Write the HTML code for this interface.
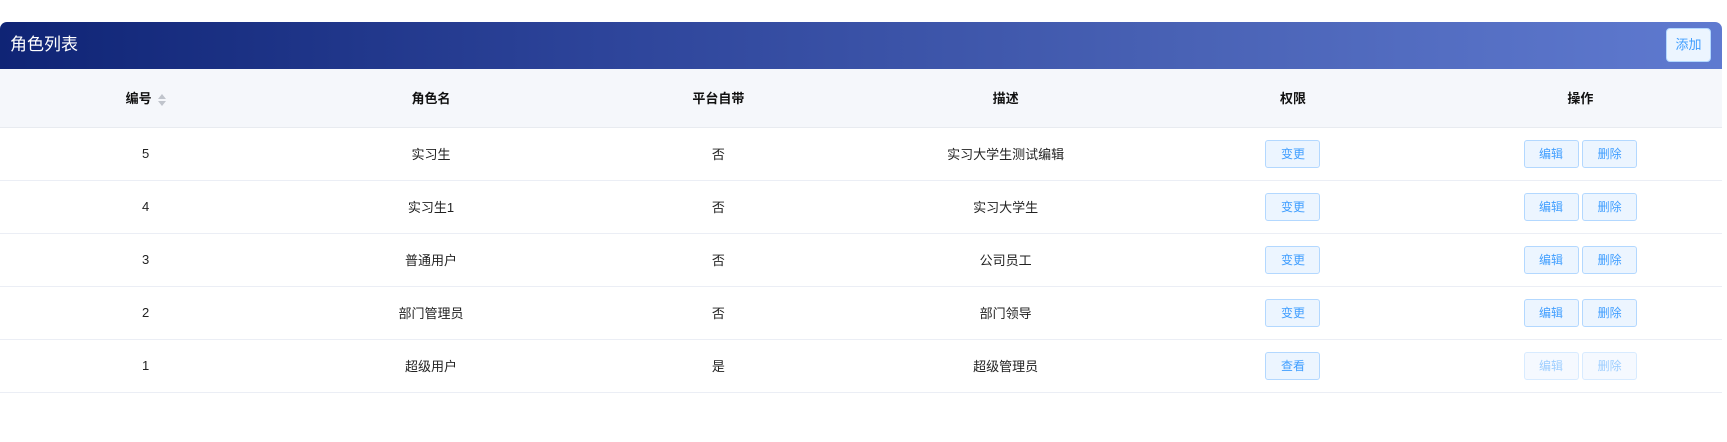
<!DOCTYPE html>
<html><head><meta charset="utf-8"><style>
*{margin:0;padding:0;box-sizing:border-box}
body{width:1727px;height:442px;background:#fff;font-family:"Liberation Sans","Noto Sans CJK SC",sans-serif;position:relative;overflow:hidden}
.bar{position:absolute;left:0;top:22px;width:1722px;height:47px;border-radius:7px 7px 0 0;background:linear-gradient(90deg,#0f2475 0%,#2d449a 35%,#4a63b6 70%,#5f7ad0 100%)}
.bar .t{position:absolute;left:10px;top:13px;color:#fff;font-size:17px;line-height:20px}
.add{position:absolute;left:1666px;top:6px;width:45px;height:34px;background:#ecf5ff;border:1px solid #b3d8ff;border-radius:4px;color:#409eff;font-size:13px;line-height:32px;text-align:center}
table{position:absolute;left:0;top:69px;width:1724px;border-collapse:collapse;table-layout:fixed}
th{height:58px;background:#f5f7fb;font-size:13px;font-weight:bold;color:#111;border-bottom:1px solid #e8ebf0}
td{height:53px;font-size:13px;color:#222;text-align:center;border-bottom:1px solid #ebeef5}
th:first-child,td:first-child{padding-left:4px}
.b{display:inline-block;width:55px;height:28px;line-height:26px;background:#ecf5ff;border:1px solid #b3d8ff;border-radius:3px;color:#409eff;font-size:12px;vertical-align:middle}
.d{opacity:.5}
.s{display:inline-block;vertical-align:middle;margin-left:6px;width:8px;height:12px;position:relative}
.s:before{content:"";position:absolute;left:0;top:0;border:4px solid transparent;border-bottom:5px solid #c0c4cc;border-top:0}
.s:after{content:"";position:absolute;left:0;top:7px;border:4px solid transparent;border-top:5px solid #c0c4cc;border-bottom:0}
.wrap{position:absolute;left:0;top:0;width:1722px;height:442px;overflow:hidden}
</style></head><body>
<div class="bar"><div class="t">角色列表</div><div class="add">添加</div></div>
<div class="wrap">
<table>
<tr><th>编号<span class="s"></span></th><th>角色名</th><th>平台自带</th><th>描述</th><th>权限</th><th>操作</th></tr>
<tr><td>5</td><td>实习生</td><td>否</td><td>实习大学生测试编辑</td><td><span class="b">变更</span></td><td><span class="b">编辑</span> <span class="b">删除</span></td></tr>
<tr><td>4</td><td>实习生1</td><td>否</td><td>实习大学生</td><td><span class="b">变更</span></td><td><span class="b">编辑</span> <span class="b">删除</span></td></tr>
<tr><td>3</td><td>普通用户</td><td>否</td><td>公司员工</td><td><span class="b">变更</span></td><td><span class="b">编辑</span> <span class="b">删除</span></td></tr>
<tr><td>2</td><td>部门管理员</td><td>否</td><td>部门领导</td><td><span class="b">变更</span></td><td><span class="b">编辑</span> <span class="b">删除</span></td></tr>
<tr><td>1</td><td>超级用户</td><td>是</td><td>超级管理员</td><td><span class="b">查看</span></td><td><span class="b d">编辑</span> <span class="b d">删除</span></td></tr>
</table>
</div>
</body></html>
